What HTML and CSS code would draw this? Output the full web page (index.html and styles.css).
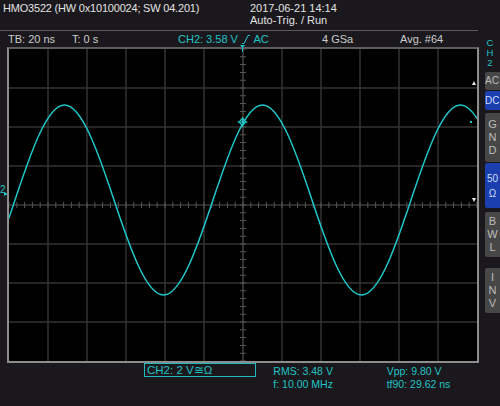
FILE: index.html
```html
<!DOCTYPE html>
<html lang="en">
<head>
    <meta charset="UTF-8">
    <title>HMO3522 Screenshot</title>
    <link rel="stylesheet" href="styles.css">
</head>
<body>
    <div class="top">
        <div class="left">
            <div class="header">
                <div class="model">HMO3522 (HW 0x10100024; SW 04.201)</div>
                <div class="state">
                    <div>2017-06-21 14:14</div>
                    <div>Auto-Trig. / Run</div>
                </div>
            </div>

            <div class="infobar">
                <span>TB: 20 ns</span>
                <span>T: 0 s</span>
                <span class="cyan">CH2: 3.58 V <svg class="slope" width="8" height="9" viewBox="0 0 8 9"><path d="M0 8.5H2L6 0.5H8" fill="none" stroke="currentColor" stroke-width="1"/></svg> AC</span>
                <span>4 GSa</span>
                <span>Avg. #64</span>
            </div>

            <div class="scope-row">
                <div class="offset"><span>2</span><i class="arrow"></i></div>
                <div class="scope">
                    <svg width="468" height="312" viewBox="0 0 468 312">
                        <defs>
                            <clipPath id="area"><rect x="0" y="0" width="468" height="312"/></clipPath>
                        </defs>
                        <!-- grid -->
                        <path class="grid" d="M39 0V312M78 0V312M117 0V312M156 0V312M195 0V312M273 0V312M312 0V312M351 0V312M390 0V312M429 0V312M0 39H468M0 78H468M0 117H468M0 195H468M0 234H468M0 273H468"/>
                        <path class="axis" d="M234 0V312M0 156H468"/>
                        <line class="ticks" x1="234" y1="0" x2="234" y2="312"/>
                        <line class="ticks" x1="0" y1="156" x2="468" y2="156"/>
                        <!-- waveform, drawn in screen coords -->
                        <g clip-path="url(#area)">
                            <path class="wave" transform="translate(-9 -49)" d="M-34.5 295
                                c17.18 0 33.36 -46.33 49.5 -95 c16.14 -48.67 32.32 -95 49.5 -95 c17.18 0 33.36 46.33 49.5 95 c16.14 48.67 32.32 95 49.5 95
                                c17.18 0 33.36 -46.33 49.5 -95 c16.14 -48.67 32.32 -95 49.5 -95 c17.18 0 33.36 46.33 49.5 95 c16.14 48.67 32.32 95 49.5 95
                                c17.18 0 33.36 -46.33 49.5 -95 c16.14 -48.67 32.32 -95 49.5 -95 c17.18 0 33.36 46.33 49.5 95 c16.14 48.67 32.32 95 49.5 95"/>
                        </g>
                        <!-- trigger point -->
                        <g class="trig">
                            <path d="M233.5 69.5L237 73L233.5 76.5L230 73Z"/>
                            <path d="M228.5 73H238.5M233.5 68V78"/>
                        </g>
                        <!-- markers -->
                        <path class="tpos" d="M231 -4H236L233.5 -1Z"/>
                        <line class="tstem" x1="233.5" y1="-1" x2="233.5" y2="3"/>
                        <path class="mark" d="M463 36H467L465 32Z"/>
                        <path class="mark" d="M463 149H467L465 153Z"/>
                        <rect class="level" x="461" y="72" width="2" height="2"/>
                    </svg>
                </div>
            </div>
        </div>

        <div class="side">
            <div class="chlabel">C<br>H<br>2</div>
            <div class="btn ac">AC</div>
            <div class="btn dc on">DC</div>
            <div class="btn gnd stack">G<br>N<br>D</div>
            <div class="btn ohm on stack">50<br>Ω</div>
            <div class="btn bwl stack">B<br>W<br>L</div>
            <div class="btn inv stack">I<br>N<br>V</div>
        </div>
    </div>

    <div class="footer">
        <div class="chbox">CH2: 2 V≅Ω</div>
        <div class="meas">
            <div>RMS: 3.48 V</div>
            <div>f: 10.00 MHz</div>
        </div>
        <div class="meas">
            <div>Vpp: 9.80 V</div>
            <div>tf90: 29.62 ns</div>
        </div>
    </div>
</body>
</html>
```

FILE: styles.css
```css
* {
    box-sizing: border-box;
}
body {
    margin: 0;
    width: 500px;
    height: 406px;
    overflow: hidden;
    background: #1a181c;
    font-family: "Liberation Sans", Arial, sans-serif;
    color: #d8d8d8;
}
.cyan {
    color: #22c3c6;
}
.top {
    display: flex;
}
.left {
    width: 478px;
}
.header {
    display: flex;
    height: 31px;
    padding-top: 2px;
    border-bottom: 1px solid #5a5a5a;
    font-size: 11px;
    line-height: 12px;
    color: #e2e2e2;
}
.model {
    width: 250px;
    padding-left: 3px;
    letter-spacing: -0.2px;
}
.infobar {
    display: grid;
    grid-template-columns: 64px 106px 144px 78px auto;
    height: 16px;
    padding-left: 8px;
    font-size: 11px;
    line-height: 16px;
    color: #cccccc;
    white-space: nowrap;
}
.slope {
    vertical-align: -1px;
    margin: 0 1px;
}
.scope-row {
    display: flex;
}
.offset {
    width: 7px;
    padding-top: 138px;
    color: #22c3c6;
    font-size: 10px;
    line-height: 10px;
}
.arrow {
    display: block;
    width: 0;
    height: 0;
    margin: -3px 0 0 4px;
    border-left: 4px solid #22c3c6;
    border-top: 2px solid transparent;
    border-bottom: 2px solid transparent;
}
.scope {
    width: 472px;
    height: 316px;
    border: 2px solid #8d8d8d;
    border-top-color: #5e5e5e;
    background: #000;
}
.scope svg {
    display: block;
    overflow: visible;
}
.grid {
    fill: none;
    stroke: #333333;
    stroke-width: 1.5;
}
.axis {
    fill: none;
    stroke: #555555;
    stroke-width: 1.2;
}
.ticks {
    stroke: #555555;
    stroke-width: 6;
    stroke-dasharray: 1 6.8;
    stroke-dashoffset: 0.5;
}
.wave {
    fill: none;
    stroke: #1fc6c8;
    stroke-width: 1.5;
}
.trig {
    fill: none;
    stroke: #1fc6c8;
    stroke-width: 1.2;
}
.tpos {
    fill: #22c3c6;
}
.tstem {
    stroke: #22c3c6;
    stroke-width: 1;
}
.mark {
    fill: #e8e8e8;
}
.level {
    fill: #22c3c6;
}
.side {
    width: 22px;
    padding-top: 38px;
    overflow: hidden;
}
.chlabel {
    text-align: center;
    padding-left: 2px;
    font-size: 9.5px;
    line-height: 10px;
    color: #22c3c6;
}
.btn {
    width: 15px;
    margin-left: 7px;
    background: #474747;
    color: #bdbdbd;
    border-radius: 2px 0 0 2px;
    font-size: 11px;
    white-space: nowrap;
}
.btn.on {
    background: #1b3faf;
    color: #c9dcff;
}
.stack {
    display: flex;
    flex-direction: column;
    justify-content: center;
    text-align: center;
    line-height: 13px;
}
.ac {
    margin-top: 4px;
    height: 18px;
    line-height: 18px;
    font-size: 10px;
}
.dc {
    margin-top: 1px;
    height: 19px;
    line-height: 19px;
    font-size: 10px;
}
.gnd {
    margin-top: 3px;
    height: 49px;
}
.ohm {
    margin-top: 1px;
    height: 45px;
    line-height: 15px;
    font-size: 10px;
}
.bwl {
    margin-top: 4px;
    height: 45px;
}
.inv {
    margin-top: 11px;
    height: 45px;
}
.footer {
    display: flex;
    padding-left: 144px;
    color: #22c3c6;
}
.chbox {
    width: 113px;
    height: 14px;
    border: 1px solid #22b7ba;
    padding-left: 2px;
    font-size: 11.5px;
    line-height: 12px;
}
.meas {
    width: 114px;
    padding-top: 1.5px;
    font-size: 10.5px;
    line-height: 13px;
}
.chbox + .meas {
    margin-left: 17px;
}
```
